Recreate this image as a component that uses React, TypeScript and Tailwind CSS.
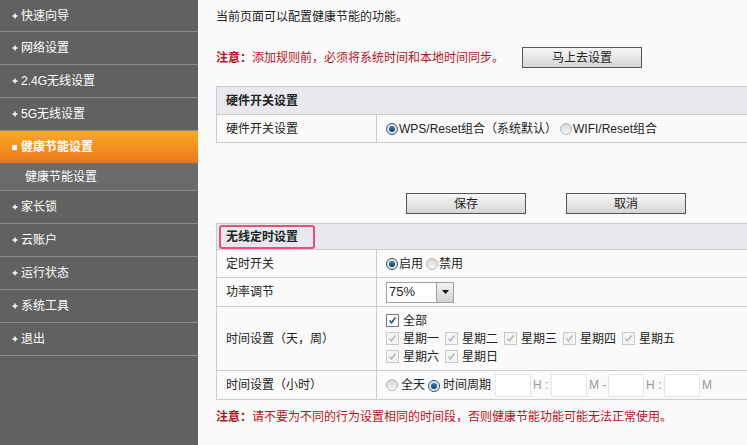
import React from "react";

const FONT = "font-['Liberation_Sans','Noto_Sans_CJK_SC',sans-serif]";

const topMenu = ["快速向导", "网络设置", "2.4G无线设置", "5G无线设置"];
const bottomMenu = ["家长锁", "云账户", "运行状态", "系统工具", "退出"];

function Plus() {
  return (
    <svg width="6" height="6" viewBox="0 0 6 6" className="mr-[3px] shrink-0">
      <path d="M3 0.5v5M0.5 3h5" stroke="#fff" strokeWidth="1.4" />
    </svg>
  );
}

function MenuItem({ label, first }: { label: string; first?: boolean }) {
  return (
    <div
      className={`${first ? "h-[32px]" : "h-[33px]"} flex items-center pl-[12px] border-b border-[#8d8d8d] text-white text-[12px]`}
    >
      <Plus />
      {label}
    </div>
  );
}

function Radio({ checked }: { checked?: boolean }) {
  if (checked) {
    return (
      <span className="inline-flex w-[12px] h-[12px] rounded-full border border-[#3a4f63] bg-[#dfe7ef] items-center justify-center shrink-0">
        <span className="w-[6px] h-[6px] rounded-full bg-gradient-to-b from-[#3f7fb0] to-[#143a5a]" />
      </span>
    );
  }
  return (
    <span className="inline-block w-[12px] h-[12px] rounded-full border border-[#b4b4b4] bg-gradient-to-b from-[#d8d8d8] to-[#f4f4f4] shrink-0" />
  );
}

function Check({ disabled }: { disabled?: boolean }) {
  return (
    <span
      className={`inline-flex w-[13px] h-[13px] border items-center justify-center shrink-0 ${
        disabled ? "border-[#c9c9c9] bg-[#f4f4f4]" : "border-[#7a7a7a] bg-white"
      }`}
    >
      <svg width="9" height="9" viewBox="0 0 9 9">
        <path
          d="M1.5 4.5l2 2.3 4-5.3"
          fill="none"
          stroke={disabled ? "#b8b8b8" : "#274f8a"}
          strokeWidth="1.5"
        />
      </svg>
    </span>
  );
}

function Day({ label }: { label: string }) {
  return (
    <span className="inline-flex items-center gap-[4px] mr-[6px]">
      <Check disabled />
      <span className="w-[36px]">{label}</span>
    </span>
  );
}

function Btn({ label }: { label: string }) {
  return (
    <button className="w-[120px] h-[21px] border border-[#555] bg-gradient-to-b from-[#f7f7f7] to-[#d6d6d6] text-[12px] text-[#222] leading-none">
      {label}
    </button>
  );
}

function TimeBox() {
  return <span className="inline-block w-[36px] h-[23px] bg-white border border-[#e6e6e6]" />;
}

export default function App() {
  return (
    <div className={`flex w-[747px] h-[445px] overflow-hidden ${FONT}`}>
      {/* sidebar */}
      <div className="w-[198px] shrink-0 bg-[#616161]">
        {topMenu.map((m, i) => (
          <MenuItem key={m} label={m} first={i === 0} />
        ))}
        <div className="h-[32px] flex items-center pl-[12px] bg-gradient-to-b from-[#f8ac21] to-[#ec771d] text-white text-[12px] font-bold">
          <span className="w-[5px] h-[5px] bg-white mr-[4px]" />
          健康节能设置
        </div>
        <div className="h-[28px] flex items-center pl-[25px] bg-[#6b6b6b] border-b border-[#8d8d8d] text-white text-[12px]">
          健康节能设置
        </div>
        {bottomMenu.map((m) => (
          <MenuItem key={m} label={m} />
        ))}
      </div>

      {/* main */}
      <div className="flex-1 bg-[#fafafa] pl-[18px] pt-[9px] text-[12px] text-[#222] overflow-hidden">
        <div className="leading-[16px]">当前页面可以配置健康节能的功能。</div>

        <div className="mt-[22px] flex items-center h-[21px]">
          <span className="text-[#b3141c]">
            <b>注意：</b>添加规则前，必须将系统时间和本地时间同步。
          </span>
          <span className="ml-[18px]">
            <Btn label="马上去设置" />
          </span>
        </div>

        <table className="mt-[18px] w-[600px] border-collapse">
          <tbody>
            <tr className="h-[28px] bg-[#e8e8ee]">
              <td colSpan={2} className="border border-[#cbcbcb] pl-[9px] font-bold">
                硬件开关设置
              </td>
            </tr>
            <tr className="h-[28px]">
              <td className="w-[160px] border border-[#cbcbcb] pl-[9px]">硬件开关设置</td>
              <td className="border border-[#cbcbcb] pl-[9px]">
                <span className="inline-flex items-center gap-[1px]">
                  <Radio checked />
                  WPS/Reset组合（系统默认）
                  <span className="ml-[2px] inline-flex items-center gap-[1px]">
                    <Radio />
                    WIFI/Reset组合
                  </span>
                </span>
              </td>
            </tr>
          </tbody>
        </table>

        <div className="mt-[50px] flex gap-[40px] pl-[190px]">
          <Btn label="保存" />
          <Btn label="取消" />
        </div>

        <table className="mt-[9px] w-[600px] border-collapse">
          <tbody>
            <tr className="h-[26px] bg-[#e8e8ee]">
              <td colSpan={2} className="border border-[#cbcbcb] pl-[2px]">
                <span className="inline-flex items-center h-[24px] pl-[5px] pr-[15px] border-2 border-[#e8507a] rounded-[3px] font-bold">
                  无线定时设置
                </span>
              </td>
            </tr>
            <tr className="h-[28px]">
              <td className="w-[160px] border border-[#cbcbcb] pl-[9px]">定时开关</td>
              <td className="border border-[#cbcbcb] pl-[9px]">
                <span className="inline-flex items-center gap-[1px]">
                  <Radio checked />
                  启用
                  <span className="ml-[2px] inline-flex items-center gap-[1px]">
                    <Radio />
                    禁用
                  </span>
                </span>
              </td>
            </tr>
            <tr className="h-[29px]">
              <td className="border border-[#cbcbcb] pl-[9px]">功率调节</td>
              <td className="border border-[#cbcbcb] pl-[9px]">
                <span className="inline-flex items-center w-[68px] h-[21px] border border-[#a0a0a0] bg-white pl-[2px] justify-between">
                  <span className="text-[13px]">75%</span>
                  <span className="w-[17px] h-[19px] border-l border-[#a0a0a0] bg-gradient-to-b from-[#f2f2f2] to-[#d2d2d2] flex items-center justify-center">
                    <svg width="7" height="4" viewBox="0 0 7 4">
                      <path d="M0 0h7L3.5 4z" fill="#111" />
                    </svg>
                  </span>
                </span>
              </td>
            </tr>
            <tr className="h-[64px]">
              <td className="border border-[#cbcbcb] pl-[9px]">时间设置（天，周）</td>
              <td className="border border-[#cbcbcb] pl-[9px]">
                <div className="flex flex-col gap-[2px] leading-[16px]">
                  <span className="inline-flex items-center gap-[4px]">
                    <Check />
                    全部
                  </span>
                  <div className="flex">
                    <Day label="星期一" />
                    <Day label="星期二" />
                    <Day label="星期三" />
                    <Day label="星期四" />
                    <Day label="星期五" />
                  </div>
                  <div className="flex">
                    <Day label="星期六" />
                    <Day label="星期日" />
                  </div>
                </div>
              </td>
            </tr>
            <tr className="h-[29px]">
              <td className="border border-[#cbcbcb] pl-[9px]">时间设置（小时）</td>
              <td className="border border-[#cbcbcb] pl-[9px]">
                <div className="flex items-center">
                  <Radio />
                  <span className="ml-[3px]">全天</span>
                  <span className="ml-[3px]">
                    <Radio checked />
                  </span>
                  <span className="ml-[3px] mr-[4px]">时间周期</span>
                  <TimeBox />
                  <span className="w-[20px] pl-[2px] text-[#999]">H :</span>
                  <TimeBox />
                  <span className="w-[21px] pl-[2px] text-[#999]">M -</span>
                  <TimeBox />
                  <span className="w-[20px] pl-[2px] text-[#999]">H :</span>
                  <TimeBox />
                  <span className="pl-[2px] text-[#999]">M</span>
                </div>
              </td>
            </tr>
          </tbody>
        </table>

        <div className="mt-[8px] text-[#b3141c]">
          <b>注意：</b>请不要为不同的行为设置相同的时间段，否则健康节能功能可能无法正常使用。
        </div>
      </div>
    </div>
  );
}
